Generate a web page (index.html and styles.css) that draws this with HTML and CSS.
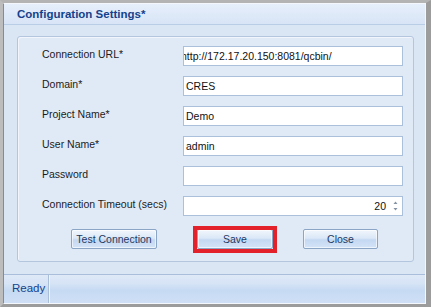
FILE: index.html
```html
<!DOCTYPE html>
<html>
<head>
<meta charset="utf-8">
<link rel="stylesheet" href="styles.css">
</head>
<body>
<div class="window">
  <div class="frame">
    <div class="titlebar">Configuration Settings*</div>
    <div class="body">
      <div class="panel">
        <div class="form">
          <div class="label">Connection URL*</div>
          <div class="field"><span class="scrolled">http://172.17.20.150:8081/qcbin/</span></div>
          <div class="label">Domain*</div>
          <div class="field">CRES</div>
          <div class="label">Project Name*</div>
          <div class="field">Demo</div>
          <div class="label">User Name*</div>
          <div class="field">admin</div>
          <div class="label">Password</div>
          <div class="field"></div>
          <div class="label">Connection Timeout (secs)</div>
          <div class="field spin">
            <span class="spin-value">20</span>
            <span class="spin-arrows">
              <svg width="7" height="14" viewBox="0 0 7 14"><path d="M3.5 2.5 L5.5 5 L1.5 5 Z" fill="#8391a3"/><path d="M1.5 9 L5.5 9 L3.5 11.5 Z" fill="#8391a3"/></svg>
            </span>
          </div>
        </div>
        <div class="buttons">
          <button class="btn btn-test">Test Connection</button>
          <span class="highlight"><button class="btn btn-save">Save</button></span>
          <button class="btn btn-close">Close</button>
        </div>
      </div>
    </div>
    <div class="statusbar">
      <div class="status-cell">Ready</div>
    </div>
  </div>
</div>
</body>
</html>
```
FILE: styles.css
```css
html, body {
  margin: 0;
  padding: 0;
}
body {
  font-family: "Liberation Sans", Arial, sans-serif;
  font-size: 10.5px;
  color: #1b1b1b;
}
.window {
  width: 431px;
  height: 307px;
  box-sizing: border-box;
  border-style: solid;
  border-width: 3px 5px 3px 3px;
  border-color: #b4b4b4 #9c9c9c #9c9c9c #bdbdbd;
  background: #8f8f8f;
}
.frame {
  height: 301px;
  box-sizing: border-box;
  border: 1px solid #f4f7fb;
  border-left-color: #8a8a8a;
  display: flex;
  flex-direction: column;
  background: #dce7f5;
}
.titlebar {
  height: 20px;
  border-bottom: 1px solid #b9cde6;
  background: linear-gradient(#e6effb, #d8e5f6);
  color: #15428b;
  font-weight: bold;
  font-size: 11.5px;
  line-height: 20px;
  padding-left: 13px;
}
.body {
  height: 249px;
  box-sizing: border-box;
  padding: 11px 11px 12px 13px;
  background: #dbe6f5;
}
.panel {
  height: 226px;
  box-sizing: border-box;
  border: 1px solid #b3c6dd;
  border-radius: 3px;
  box-shadow: inset 1px 1px 0 #f2f6fc;
  background: #e0eaf7;
  padding: 9px 10px 0 24px;
}
.form {
  display: grid;
  grid-template-columns: 141px 220px;
  grid-auto-rows: 20px;
  row-gap: 10px;
}
.label {
  line-height: 16px;
  white-space: nowrap;
}
.field {
  box-sizing: border-box;
  height: 20px;
  border: 1px solid #abc0db;
  background: #fff;
  line-height: 18px;
  padding-left: 2px;
  overflow: hidden;
  white-space: nowrap;
  color: #111;
}
.scrolled {
  margin-left: -5px;
}
.spin {
  display: flex;
  justify-content: flex-end;
  padding-right: 3px;
}
.spin-value {
  margin-right: 6px;
}
.spin-arrows {
  display: flex;
  align-items: center;
}
.spin-arrows svg {
  display: block;
}
.buttons {
  display: flex;
  align-items: flex-start;
  margin-top: 13px;
  padding-left: 29px;
}
.btn {
  font-family: inherit;
  font-size: 10.5px;
  color: #1d3a63;
  height: 20px;
  padding: 0;
  margin: 0;
  border: 1px solid #8aa5c6;
  border-radius: 2px;
  background: linear-gradient(#f1f6fc 0%, #dbe8f8 45%, #c4d8f2 55%, #d4e4f7 100%);
  box-shadow: inset 0 0 0 1px rgba(255,255,255,0.6);
}
.btn-test {
  width: 86px;
}
.highlight {
  position: relative;
  margin-left: 40px;
  display: block;
}
.highlight::after {
  content: "";
  position: absolute;
  left: -4px;
  top: -3px;
  right: -4px;
  bottom: -4px;
  border: 4px solid #e2212b;
}
.btn-save {
  display: block;
  width: 76px;
}
.btn-close {
  width: 75px;
  margin-left: 30px;
}
.statusbar {
  height: 29px;
  box-sizing: border-box;
  border-top: 1px solid #a9bedb;
  background: linear-gradient(#dfe9f7 0%, #d6e4f6 30%, #c6daf3 55%, #cfe0f5 100%);
  display: flex;
}
.status-cell {
  width: 45px;
  box-sizing: border-box;
  padding-left: 8px;
  line-height: 26px;
  color: #15428b;
  font-size: 11.5px;
  border-right: 1px solid #a9bfd9;
  box-shadow: 1px 0 0 #eef4fc;
}
```
